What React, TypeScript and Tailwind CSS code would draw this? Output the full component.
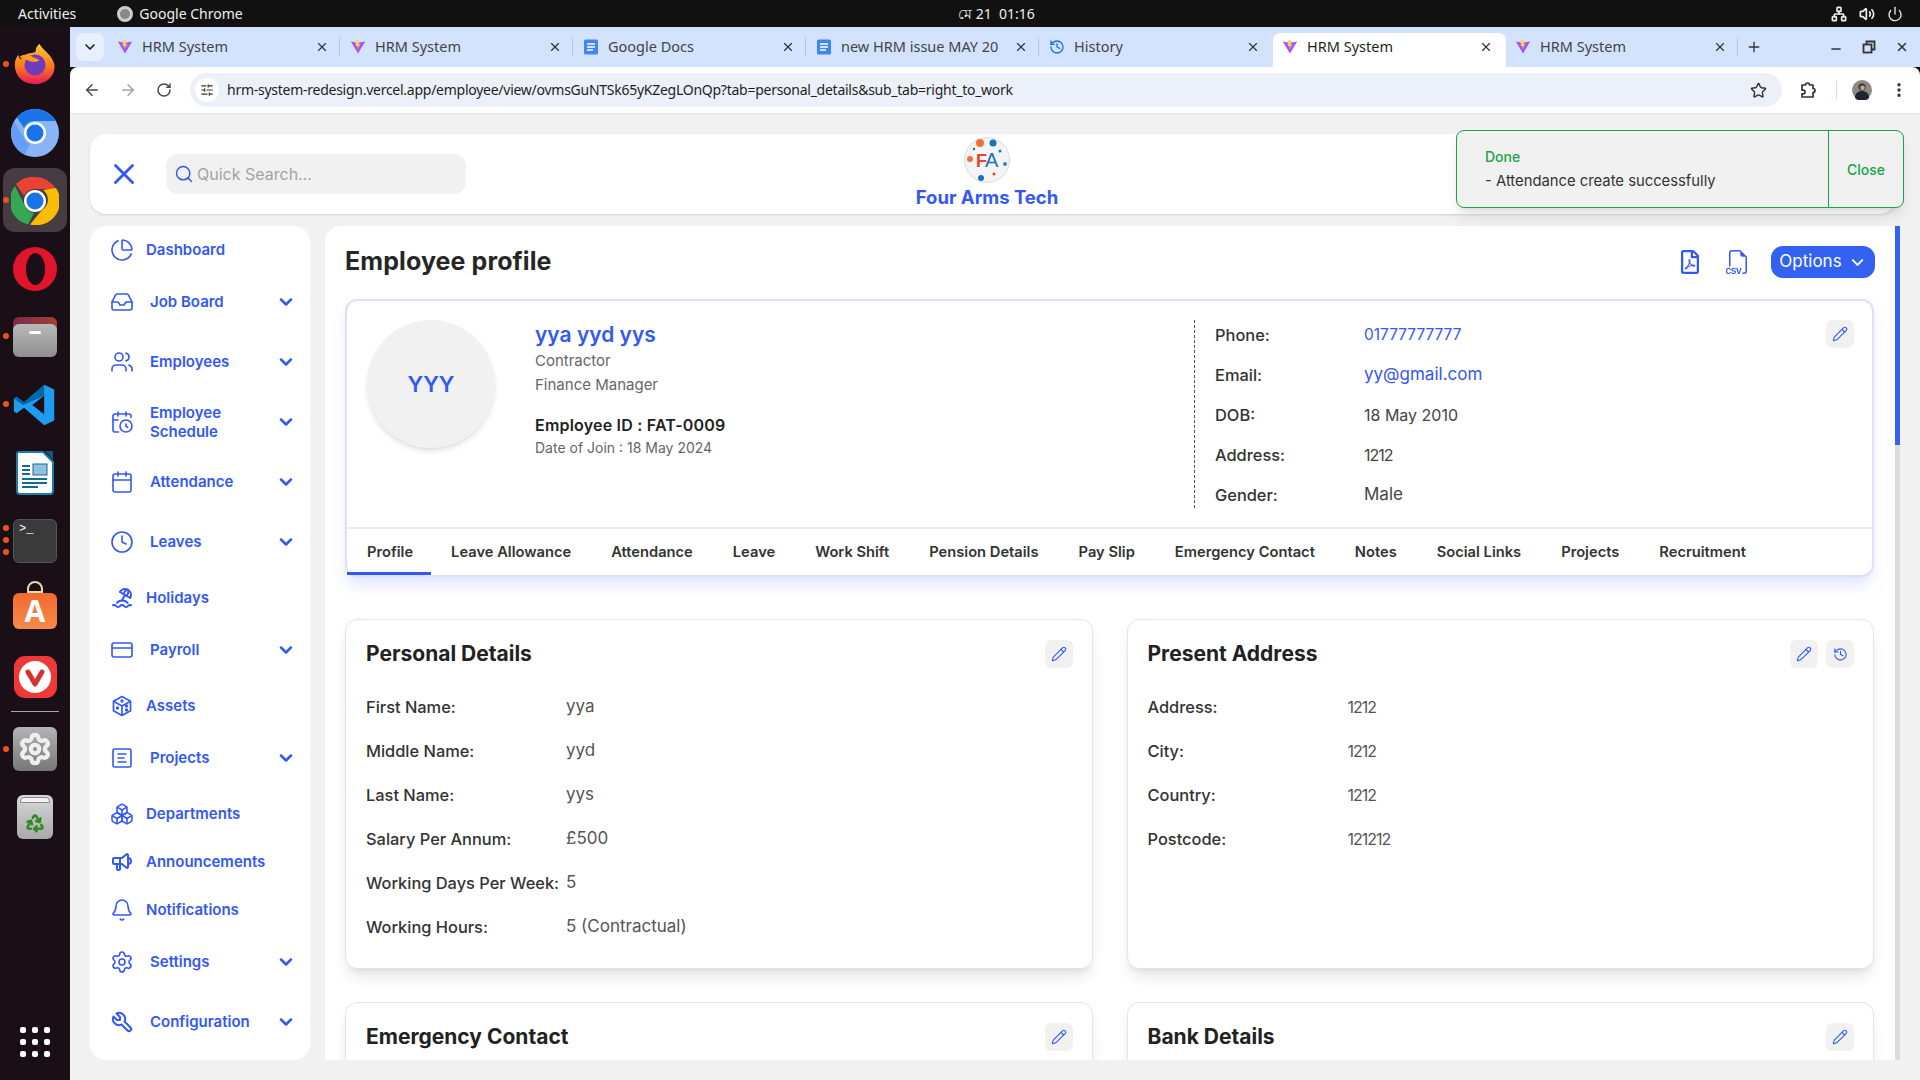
import React from 'react';
import {
  ArrowLeft, ArrowRight, Boxes, Calendar, CalendarClock, ChevronDown, Clock, CreditCard, EllipsisVertical, History,
  Minus, Pencil, PieChart, Plus, Power, Recycle, RotateCw, Search, Settings, SlidersHorizontal, Star, Users,
  Volume2, Bell, X, Network, Inbox,
} from 'lucide-react';
import { FaRegFilePdf } from 'react-icons/fa';
import { BsFiletypeCsv } from 'react-icons/bs';
import { TbBeach, TbSpeakerphone, TbTool } from 'react-icons/tb';

const ui = "font-['Inter','Liberation_Sans',sans-serif]";
const sys = "font-['Noto_Sans','Liberation_Sans',sans-serif]";

const CubeIcon = () => (
  <svg viewBox="0 0 24 24" className="w-6 h-6" fill="none" stroke="currentColor" strokeWidth="1.7" strokeLinejoin="round">
    <path d="M12 2.5l8.5 4.8v9.4L12 21.5l-8.5-4.8V7.3z" />
    <path d="M3.5 7.3L12 12l8.5-4.7M12 12v9.5" />
    <circle cx="12" cy="7" r="0.8" fill="currentColor" />
    <circle cx="7.5" cy="14" r="0.8" fill="currentColor" />
    <circle cx="16.5" cy="12" r="0.8" fill="currentColor" />
    <circle cx="16.5" cy="16" r="0.8" fill="currentColor" />
  </svg>
);

const ProjectIcon = () => (
  <svg viewBox="0 0 24 24" className="w-6 h-6" fill="none" stroke="currentColor" strokeWidth="1.6" strokeLinecap="round">
    <rect x="3" y="3" width="18" height="18" rx="1.5" />
    <path d="M8 8h8M8 12h6M8 16h8" />
  </svg>
);

const navItems = [
  { label: 'Dashboard', icon: <PieChart className="w-6 h-6" strokeWidth={1.6} /> },
  { label: 'Job Board', icon: <Inbox className="w-6 h-6" strokeWidth={1.6} />, more: true },
  { label: 'Employees', icon: <Users className="w-6 h-6" strokeWidth={1.6} />, more: true },
  { label: 'Employee Schedule', icon: <CalendarClock className="w-6 h-6" strokeWidth={1.6} />, more: true },
  { label: 'Attendance', icon: <Calendar className="w-6 h-6" strokeWidth={1.6} />, more: true },
  { label: 'Leaves', icon: <Clock className="w-6 h-6" strokeWidth={1.6} />, more: true },
  { label: 'Holidays', icon: <TbBeach className="w-6 h-6" /> },
  { label: 'Payroll', icon: <CreditCard className="w-6 h-6" strokeWidth={1.6} />, more: true },
  { label: 'Assets', icon: <CubeIcon /> },
  { label: 'Projects', icon: <ProjectIcon />, more: true },
  { label: 'Departments', icon: <Boxes className="w-6 h-6" strokeWidth={1.6} /> },
  { label: 'Announcements', icon: <TbSpeakerphone className="w-6 h-6" /> },
  { label: 'Notifications', icon: <Bell className="w-6 h-6" strokeWidth={1.6} /> },
  { label: 'Settings', icon: <Settings className="w-6 h-6" strokeWidth={1.6} />, more: true },
  { label: 'Configuration', icon: <TbTool className="w-6 h-6" />, more: true },
];

const ViteIcon = () => (
  <svg viewBox="0 0 20 20" className="w-4 h-4 shrink-0">
    <path d="M1 3l9 1.6L19 3l-9 15z" fill="#a855f7" />
    <path d="M11.5 1L6.8 2.2l.8 7 2-.5-.3 3.8 3.7-6.5-2.2.5z" fill="#fcd34d" />
  </svg>
);

const DocsIcon = () => (
  <svg viewBox="0 0 16 16" className="w-4 h-4 shrink-0">
    <rect x="1" y="0.5" width="14" height="15" rx="1.5" fill="#4285f4" />
    <path d="M4 5h8M4 8h8M4 11h6" stroke="#fff" strokeWidth="1.5" />
  </svg>
);

const tabs = [
  { title: 'HRM System', icon: <ViteIcon /> },
  { title: 'HRM System', icon: <ViteIcon /> },
  { title: 'Google Docs', icon: <DocsIcon /> },
  { title: 'new HRM issue MAY 20', icon: <DocsIcon /> },
  { title: 'History', icon: <History className="w-4 h-4 shrink-0 text-[#1a73e8]" strokeWidth={2} /> },
  { title: 'HRM System', icon: <ViteIcon />, active: true },
  { title: 'HRM System', icon: <ViteIcon /> },
];

const DockSlot = ({ children, dots = 0, tile = false }: { children: React.ReactNode; dots?: number; tile?: boolean }) => (
  <div className="relative h-[68px] w-full flex items-center justify-center shrink-0">
    {tile && <div className="absolute left-[3px] top-[2px] w-[64px] h-[64px] rounded-xl bg-[#453d42]" />}
    {dots === 1 && <div className="absolute left-[3px] top-[31px] w-[6px] h-[6px] rounded-full bg-[#e95420]" />}
    {dots === 3 && (
      <div className="absolute left-[3px] top-[19px] flex flex-col gap-[6px]">
        <div className="w-[6px] h-[6px] rounded-full bg-[#e95420]" />
        <div className="w-[6px] h-[6px] rounded-full bg-[#e95420]" />
        <div className="w-[6px] h-[6px] rounded-full bg-[#e95420]" />
      </div>
    )}
    <div className="relative">{children}</div>
  </div>
);

const Dock = () => (
  <div className={`w-[70px] shrink-0 bg-[#1a0e17] flex flex-col pt-[3px] pb-[4px] ${sys}`}>
    <DockSlot dots={1}>
      <svg viewBox="0 0 48 48" className="w-[44px] h-[44px]">
        <defs>
          <linearGradient id="ff" x1="0" y1="0" x2="0" y2="1">
            <stop offset="0" stopColor="#ffcb2e" />
            <stop offset="0.55" stopColor="#ff7a1a" />
            <stop offset="1" stopColor="#e8185c" />
          </linearGradient>
        </defs>
        <path d="M29 2c2 6 13 11 16 22 2 12-8 22-21 22C11 46 2 37 2 25c0-5 2-9 4-11 0 2 1 4 3 5 2-4 7-7 11-7 5 0 5-2 5-4 0-2 2-4 4-6z" fill="url(#ff)" />
        <circle cx="24" cy="25" r="11.5" fill="#6e3bbd" />
        <path d="M7 16c5-3 11-3 14 0 3 2 6 2 8 4-4 3-10 2-13 0-3-1-6-1-9-4z" fill="#ff9a1f" />
      </svg>
    </DockSlot>
    <DockSlot>
      <div className="w-12 h-12 mt-[1px] rounded-full bg-[#8ab4f8] relative overflow-hidden">
        <svg viewBox="0 0 48 48" className="w-12 h-12">
          <path d="M24 0a24 24 0 0 1 21 12H24a12 12 0 0 0-11 7L5 7A24 24 0 0 1 24 0z" fill="#1a73e8" />
          <path d="M3 12l11 19a12 12 0 0 0 5 4l-6 12A24 24 0 0 1 3 12z" fill="#669df6" />
          <circle cx="24" cy="24" r="11" fill="#fff" />
          <circle cx="24" cy="24" r="8.5" fill="#1a73e8" />
        </svg>
      </div>
    </DockSlot>
    <DockSlot dots={1} tile>
      <svg viewBox="0 0 48 48" className="w-12 h-12 mt-[1px]">
        <path d="M24 0a24 24 0 0 1 21 12H24a12 12 0 0 0-11 7L5 7A24 24 0 0 1 24 0z" fill="#ea4335" />
        <path d="M4 9l10 20a12 12 0 0 0 9 7l-6 11.5A24 24 0 0 1 4 9z" fill="#34a853" />
        <path d="M45 11a24 24 0 0 1-26 36.5L31 33a12 12 0 0 0 1-20z" fill="#fbbc04" />
        <circle cx="24" cy="24" r="11" fill="#fff" />
        <circle cx="24" cy="24" r="8.5" fill="#1a73e8" />
      </svg>
    </DockSlot>
    <DockSlot>
      <div className="w-[44px] h-[44px] mt-[1px] rounded-full bg-[#e0152c] flex items-center justify-center">
        <div className="w-[19px] h-[32px] rounded-[50%] bg-[#1a0e17]" />
      </div>
    </DockSlot>
    <DockSlot dots={1}>
      <div className="w-[44px] h-[40px] mt-[1px] relative">
        <div className="absolute left-0 top-0 w-full h-[14px] rounded-t-md bg-gradient-to-r from-[#7c2a4d] to-[#a5402e]" />
        <div className="absolute left-0 top-[7px] w-full h-[33px] rounded-md bg-gradient-to-b from-[#b9b9b9] to-[#8e8e8e] flex justify-center pt-[7px]">
          <div className="w-3 h-[3px] rounded-sm bg-white" />
        </div>
      </div>
    </DockSlot>
    <DockSlot dots={1}>
      <svg viewBox="0 0 48 48" className="w-[44px] h-[44px] mt-[1px]">
        <path d="M34 2l11 5v34l-11 5-22-19-8 6-3-2v-14l3-2 8 6zM34 14L21 24l13 10z" fill="#1f9cf0" />
        <path d="M34 2L12 21l-8-6-3 2 10 7 23-10z" fill="#0065a9" />
      </svg>
    </DockSlot>
    <DockSlot>
      <svg viewBox="0 0 38 44" className="w-[38px] h-[44px] mt-[2px]">
        <path d="M3 1h24l10 10v29a3 3 0 0 1-3 3H4a3 3 0 0 1-3-3V3a2 2 0 0 1 2-2z" fill="#fff" stroke="#1c7ea8" strokeWidth="2" />
        <path d="M29 0h8v9z" fill="#13587a" />
        <path d="M6 15h8M6 19h8M6 23h8M6 28h25M6 32h25M6 36h16" stroke="#14689a" strokeWidth="1.8" />
        <rect x="17" y="13" width="14" height="11" fill="#8fc3de" stroke="#14689a" />
      </svg>
    </DockSlot>
    <DockSlot dots={3}>
      <div className="w-[44px] h-[44px] mt-[1px] rounded-md bg-[#3a3a3a] border border-[#555] px-[5px] pt-[1px] text-white text-[12px] leading-[16px] font-mono">&gt;_</div>
    </DockSlot>
    <DockSlot>
      <div className="relative w-[44px] h-[44px] -mt-[3px]">
        <div className="absolute left-[14px] top-[-4px] w-4 h-3 rounded-t-full border-2 border-[#e8d9b0]" />
        <div className="absolute inset-x-0 bottom-0 h-[36px] rounded-md bg-gradient-to-b from-[#f26a2a] to-[#f58a4c] flex items-center justify-center text-white font-bold text-[30px] leading-none">A</div>
      </div>
    </DockSlot>
    <DockSlot>
      <div className="w-[43px] h-[42px] mt-[1px] rounded-[11px] bg-[#ef3939] flex items-center justify-center">
        <div className="w-8 h-8 rounded-full bg-white flex items-center justify-center">
          <svg viewBox="0 0 24 24" className="w-6 h-6" fill="none" stroke="#d92f2f" strokeWidth="5" strokeLinecap="round" strokeLinejoin="round">
            <path d="M5 7l7 12 7-12" />
          </svg>
        </div>
      </div>
    </DockSlot>
    <div className="h-px mx-[11px] mt-[1px] mb-[3px] bg-[#a8a4a7] shrink-0" />
    <DockSlot dots={1}>
      <div className="w-[44px] h-[44px] rounded-md bg-gradient-to-b from-[#b4b4b4] to-[#777] flex items-center justify-center">
        <Settings className="w-[34px] h-[34px] text-[#efefef]" strokeWidth={3} />
      </div>
    </DockSlot>
    <DockSlot>
      <div className="w-[36px] h-[44px] rounded-md bg-gradient-to-b from-[#d8d8d8] to-[#a9a9a9] flex flex-col items-center justify-between pt-[2px] pb-[6px]">
        <div className="w-[30px] h-[6px] rounded-t-sm bg-[#f2f2f2] border border-[#8a8a8a]" />
        <Recycle className="w-[20px] h-[20px] text-[#2e8b23]" strokeWidth={3} />
      </div>
    </DockSlot>
    <div className="mt-auto mb-[19px] mx-auto grid grid-cols-3 gap-[6px]">
      {Array.from({ length: 9 }).map((_, i) => (
        <div key={i} className="w-[6px] h-[6px] rounded-[2px] bg-white" />
      ))}
    </div>
  </div>
);

const ChromeTabs = () => (
  <div className={`h-[40px] shrink-0 bg-[#d3e3fd] flex items-end pl-[6px] ${sys}`}>
    <div className="w-[28px] h-[28px] mb-[6px] rounded-lg bg-[#e8f0fe] flex items-center justify-center mr-[4px]">
      <ChevronDown className="w-4 h-4 text-[#1f1f1f]" strokeWidth={2.5} />
    </div>
    {tabs.map((t, i) => (
      <div
        key={i}
        className={`h-[34px] w-[233px] pb-[6px] flex items-center pl-[9px] pr-[13px] gap-[9px] text-[14.5px] ${t.active ? 'bg-white rounded-t-lg text-[#1f1f1f]' : 'text-[#444]'}`}
      >
        {t.icon}
        <span className="flex-1 overflow-hidden whitespace-nowrap">{t.title}</span>
        <X className="w-[14px] h-[14px] shrink-0 text-[#333]" strokeWidth={2} />
        {!t.active && i !== 4 && <div className="w-px h-5 bg-[#a8c7fa] -mr-[12px] ml-[1px] shrink-0" />}
      </div>
    ))}
    <Plus className="w-[16px] h-[16px] ml-[7px] mb-[12px] text-[#333]" strokeWidth={2} />
    <div className="ml-auto flex items-center gap-[19px] pr-[11px] mb-[11px] text-[#333]">
      <Minus className="w-[14px] h-[14px] mt-[4px]" strokeWidth={2.5} />
      <svg viewBox="0 0 14 14" className="w-[14px] h-[14px]" fill="none" stroke="currentColor" strokeWidth="1.8">
        <rect x="1.5" y="4.5" width="8" height="8" />
        <path d="M4.5 4V1.5h8v8H10" />
      </svg>
      <X className="w-[14px] h-[14px]" strokeWidth={2.5} />
    </div>
  </div>
);

const Toolbar = () => (
  <div className={`h-[47px] shrink-0 bg-white rounded-t-lg border-b border-[#e4e4e4] flex items-center pl-[13px] pr-[12px] ${sys}`}>
    <ArrowLeft className="w-[18px] h-[18px] text-[#474747]" strokeWidth={2} />
    <ArrowRight className="w-[18px] h-[18px] ml-[18px] text-[#a3a3a3]" strokeWidth={2} />
    <RotateCw className="w-[16px] h-[16px] ml-[19px] text-[#474747]" strokeWidth={2.2} />
    <div className="ml-[18px] w-[1592px] h-[34px] rounded-full bg-[#ecf0f8] flex items-center pl-[5px] pr-[15px]">
      <div className="w-[24px] h-[24px] rounded-full bg-white flex items-center justify-center">
        <SlidersHorizontal className="w-[14px] h-[14px] text-[#333]" strokeWidth={2} />
      </div>
      <span className="ml-[8px] -mt-[1px] flex-1 text-[14px] tracking-[-0.26px] text-[#1f1f1f] whitespace-nowrap">hrm-system-redesign.vercel.app/employee/view/ovmsGuNTSk65yKZegLOnQp?tab=personal_details&amp;sub_tab=right_to_work</span>
      <Star className="w-[17px] h-[17px] text-[#333]" strokeWidth={2} />
    </div>
    <svg viewBox="0 0 18 18" className="w-[18px] h-[18px] ml-[17px] text-[#333]" fill="none" stroke="currentColor" strokeWidth="1.7" strokeLinejoin="round">
      <path d="M3 4h3.5a2 2 0 0 1 4 0H14v3.5a2 2 0 0 1 0 4V16H3v-3.2h1.2a1.8 1.8 0 0 0 0-3.6H3z" />
    </svg>
    <div className="w-px h-5 ml-[19px] bg-[#d3e3fd]" />
    <svg viewBox="0 0 20 20" className="w-[20px] h-[20px] ml-[15px]">
      <circle cx="10" cy="10" r="10" fill="#8f8a86" />
      <path d="M3 18c0-5 3-7 7-7s7 2 7 7a10 10 0 0 1-14 0z" fill="#1f2530" />
      <circle cx="10" cy="7" r="3.6" fill="#3b3330" />
      <circle cx="10.5" cy="7.8" r="2.3" fill="#c9a692" />
    </svg>
    <EllipsisVertical className="w-[18px] h-[18px] ml-[18px] text-[#333]" strokeWidth={2.5} />
  </div>
);

const Logo = () => (
  <svg viewBox="0 0 46 46" className="w-[46px] h-[46px]">
    <circle cx="23" cy="23" r="22.5" fill="#f4f4f4" stroke="#dcdcdc" />
    <circle cx="16" cy="6" r="4" fill="#f0703a" />
    <circle cx="29" cy="6" r="3.5" fill="#1f6fb5" />
    <circle cx="6" cy="22" r="3" fill="#f0703a" />
    <circle cx="41" cy="27" r="2" fill="#1f8fc9" />
    <circle cx="17" cy="41" r="3" fill="#1f6fb5" />
    <circle cx="30" cy="37" r="1.5" fill="#e8452e" />
    <circle cx="36" cy="14" r="1.5" fill="#1f6fb5" />
    <circle cx="10" cy="12" r="1.2" fill="#1f6fb5" />
    <text x="12" y="30" fontSize="18" fontWeight="700" fill="#e8452e" fontFamily="Liberation Sans Narrow, Liberation Sans">F</text>
    <text x="21" y="30" fontSize="20" fill="#1f6fb5" fontFamily="Liberation Sans">A</text>
  </svg>
);

const Header = () => (
  <div className="relative h-[80px] shrink-0 mr-[24px] rounded-2xl bg-white shadow-sm flex items-center pl-[17px]">
    <X className="w-[34px] h-[34px] text-[#3358f4]" strokeWidth={2} />
    <div className="ml-[25px] w-[300px] h-[40px] rounded-xl bg-[#f1f1f1] flex items-center pl-[8px] gap-[3px]">
      <Search className="w-[20px] h-[20px] text-[#3358f4]" strokeWidth={1.8} />
      <span className="text-[16px] text-[#a0a3ad] -mt-[1px]">Quick Search...</span>
    </div>
    <div className="absolute left-[827px] top-[3px] w-[140px] flex flex-col items-center">
      <Logo />
      <span className="text-[18.5px] leading-[22px] mt-[3px] font-bold text-[#3358f4] whitespace-nowrap">Four Arms Tech</span>
    </div>
    <div className="absolute left-[1366px] -top-[4px] w-[448px] h-[78px] z-10 rounded-lg bg-[#f1f1f1] border border-[#16a34a] shadow-lg flex text-[14px]">
      <div className="flex-1 pl-[28px] pt-[16px]">
        <div className="text-[#16a34a] font-medium leading-[20px]">Done</div>
        <div className="text-[#333] text-[14.8px] leading-[20px] mt-[4px]">- Attendance create successfully</div>
      </div>
      <div className="w-[75px] border-l border-[#16a34a] flex items-center justify-center text-[#16a34a] font-medium">Close</div>
    </div>
  </div>
);

const Sidebar = () => (
  <div className="w-[220px] shrink-0 rounded-2xl bg-white pb-[6px] text-[#3358f4] font-semibold text-[15px] leading-[19.5px]">
    {navItems.map((n) =>
      n.more ? (
        <div key={n.label} className="h-[60px] pb-[4px] flex items-center pl-[20px] pr-[14px]">
          <div className="w-6 h-6 flex items-center justify-center shrink-0">{n.icon}</div>
          <span className="ml-[16px] flex-1 w-[100px] pr-[12px]">{n.label}</span>
          <ChevronDown className="w-[20px] h-[20px] shrink-0" strokeWidth={3} />
        </div>
      ) : (
        <div key={n.label} className="h-[48px] flex items-center pl-[20px]">
          <div className="w-6 h-6 flex items-center justify-center shrink-0">{n.icon}</div>
          <span className="ml-[12px]">{n.label}</span>
        </div>
      ),
    )}
  </div>
);

const IconButton = ({ children }: { children: React.ReactNode }) => (
  <div className="w-[28px] h-[28px] rounded-md bg-[#f1f1f1] flex items-center justify-center text-[#3358f4]">{children}</div>
);

const EditButton = () => (
  <IconButton>
    <Pencil className="w-[16px] h-[16px]" strokeWidth={1.6} />
  </IconButton>
);

const numeric = (v: string) => /^\d+$/.test(v);

const Row = ({ label, value }: { label: string; value: string }) => (
  <div className="flex h-[44px] items-center">
    <span className="w-[200px] text-[16.4px] font-medium text-[#333] whitespace-nowrap">{label}</span>
    <span className={`text-[#555] ${numeric(value) && value.length > 1 ? 'text-[16px] tracking-[-1px]' : 'text-[17px]'}`}>{value}</span>
  </div>
);

const Card = ({ title, actions, rows, tall }: { title: string; actions: React.ReactNode; rows?: [string, string][]; tall?: boolean }) => (
  <div className={`rounded-xl bg-white border border-[#e3e1fb] shadow-lg pl-[20px] pr-[19px] pt-[20px] ${tall ? 'h-[350px]' : 'h-[200px]'}`}>
    <div className="flex items-center justify-between h-[28px]">
      <h2 className="text-[21px] font-bold text-[#222]">{title}</h2>
      <div className="flex gap-[8px]">{actions}</div>
    </div>
    <div className="mt-[17px]">{rows?.map(([l, v]) => <Row key={l} label={l} value={v} />)}</div>
  </div>
);

const profileTabs = ['Profile', 'Leave Allowance', 'Attendance', 'Leave', 'Work Shift', 'Pension Details', 'Pay Slip', 'Emergency Contact', 'Notes', 'Social Links', 'Projects', 'Recruitment'];

const contact: [string, string, string][] = [
  ['Phone:', '01777777777', 'text-[#3358f4] text-[15.5px]'],
  ['Email:', 'yy@gmail.com', 'text-[#3358f4] text-[17px]'],
  ['DOB:', '18 May 2010', 'text-[#444] text-[16px]'],
  ['Address:', '1212', 'text-[#444] text-[16px] tracking-[-1px]'],
  ['Gender:', 'Male', 'text-[#444] text-[17px]'],
];

const ProfileCard = () => (
  <div className="mt-[21px] h-[278px] rounded-xl bg-white border-2 border-[#e0defc] shadow-lg shadow-indigo-100 flex flex-col">
    <div className="flex-1 flex">
      <div className="w-[847px] flex pl-[20px] pt-[19px]">
        <div className="w-[128px] h-[128px] rounded-full bg-[#f1f1f1] shadow-md flex items-center justify-center text-[22px] font-semibold text-[#3358f4]">YYY</div>
        <div className="ml-[40px]">
          <div className="text-[21px] leading-[29px] font-semibold text-[#3358f4]">yya yyd yys</div>
          <div className="text-[15px] leading-[24px] text-[#666]">Contractor</div>
          <div className="text-[15px] leading-[24px] text-[#666]">Finance Manager</div>
          <div className="text-[16px] tracking-[0.2px] leading-[24px] font-semibold text-[#222] mt-[16px]">Employee ID : FAT-0009</div>
          <div className="text-[14px] leading-[22px] text-[#666]">Date of Join : 18 May 2024</div>
        </div>
      </div>
      <div className="h-[188px] mt-[19px] flex-1 border-l border-dashed border-[#555] pl-[20px] pr-[20px] relative">
        <div className="absolute right-[18px] top-0">
          <EditButton />
        </div>
        <div className="-mt-[5px]">
          {contact.map(([l, v, cls]) => (
            <div key={l} className="flex h-[40px] items-center">
              <span className="w-[149px] text-[16.4px] font-medium text-[#333]">{l}</span>
              <span className={cls}>{v}</span>
            </div>
          ))}
        </div>
      </div>
    </div>
    <div className="h-[48px] border-t-2 border-[#ededed] flex text-[14.7px] font-semibold text-[#333]">
      {profileTabs.map((t, i) => (
        <div key={t} className={`flex items-center whitespace-nowrap ${i === 0 ? 'pl-[20px] pr-[18px] border-b-[3px] border-[#3358f4] pt-[3px]' : 'px-[20px] pt-[1px]'}`}>
          {t}
        </div>
      ))}
    </div>
  </div>
);

const Main = () => (
  <div className="flex-1 min-w-0 mr-[20px] rounded-tl-2xl bg-white flex overflow-hidden">
    <div className="flex-1 min-w-0 pl-[20px] pr-[21px] pt-[20px] overflow-hidden">
      <div className="flex items-center justify-between h-[32px] -mr-[1px]">
        <h1 className="text-[25px] tracking-[0.1px] font-bold text-[#262626]">Employee profile</h1>
        <div className="flex items-center text-[#3358f4]">
          <FaRegFilePdf className="w-[20px] h-[24px]" />
          <BsFiletypeCsv className="w-[24px] h-[26px] ml-[26px]" />
          <div className="ml-[21px] w-[104px] h-[32px] rounded-xl bg-[#3361f0] flex items-center justify-center gap-[6px] text-white text-[17px]">
            Options
            <ChevronDown className="w-[19px] h-[19px]" strokeWidth={2.5} />
          </div>
        </div>
      </div>
      <ProfileCard />
      <div className="mt-[42px] grid grid-cols-2 gap-x-[34px] gap-y-[33px]">
        <Card
          tall
          title="Personal Details"
          actions={<EditButton />}
          rows={[
            ['First Name:', 'yya'],
            ['Middle Name:', 'yyd'],
            ['Last Name:', 'yys'],
            ['Salary Per Annum:', '£500'],
            ['Working Days Per Week:', '5'],
            ['Working Hours:', '5 (Contractual)'],
          ]}
        />
        <Card
          tall
          title="Present Address"
          actions={
            <>
              <EditButton />
              <IconButton>
                <History className="w-[15px] h-[15px]" strokeWidth={1.7} />
              </IconButton>
            </>
          }
          rows={[
            ['Address:', '1212'],
            ['City:', '1212'],
            ['Country:', '1212'],
            ['Postcode:', '121212'],
          ]}
        />
        <Card title="Emergency Contact" actions={<EditButton />} />
        <Card title="Bank Details" actions={<EditButton />} />
      </div>
    </div>
    <div className="w-[5px] shrink-0 bg-[#dcdcdc]">
      <div className="h-[219px] bg-[#3361f0]" />
    </div>
  </div>
);

export default function App() {
  return (
    <div className={`h-screen w-screen overflow-hidden flex flex-col bg-[#111] ${ui}`}>
      <div className={`h-[27px] shrink-0 bg-[#111] relative flex items-center text-[14px] text-[#eee] pl-[18px] ${sys}`}>
        <span>Activities</span>
        <div className="ml-[41px] w-4 h-4 rounded-full bg-[#888] border-[3px] border-[#ccc]" />
        <span className="ml-[6px]">Google Chrome</span>
        <span className="absolute left-[958px] top-[3px] whitespace-nowrap">মে 21&nbsp;&nbsp;01:16</span>
        <div className="ml-auto flex items-center gap-[12px] pr-[17px]">
          <Network className="w-[16px] h-[16px]" strokeWidth={2.5} />
          <Volume2 className="w-[16px] h-[16px]" strokeWidth={2.5} />
          <Power className="w-[16px] h-[16px]" strokeWidth={2} />
        </div>
      </div>
      <div className="flex-1 min-h-0 flex">
        <Dock />
        <div className="flex-1 min-w-0 flex flex-col">
          <ChromeTabs />
          <Toolbar />
          <div className="flex-1 min-h-0 bg-[#f1f1f1] pl-[20px] pt-[20px] pb-[20px] flex flex-col gap-[12px]">
            <Header />
            <div className="flex-1 min-h-0 flex gap-[15px]">
              <Sidebar />
              <Main />
            </div>
          </div>
        </div>
      </div>
    </div>
  );
}
